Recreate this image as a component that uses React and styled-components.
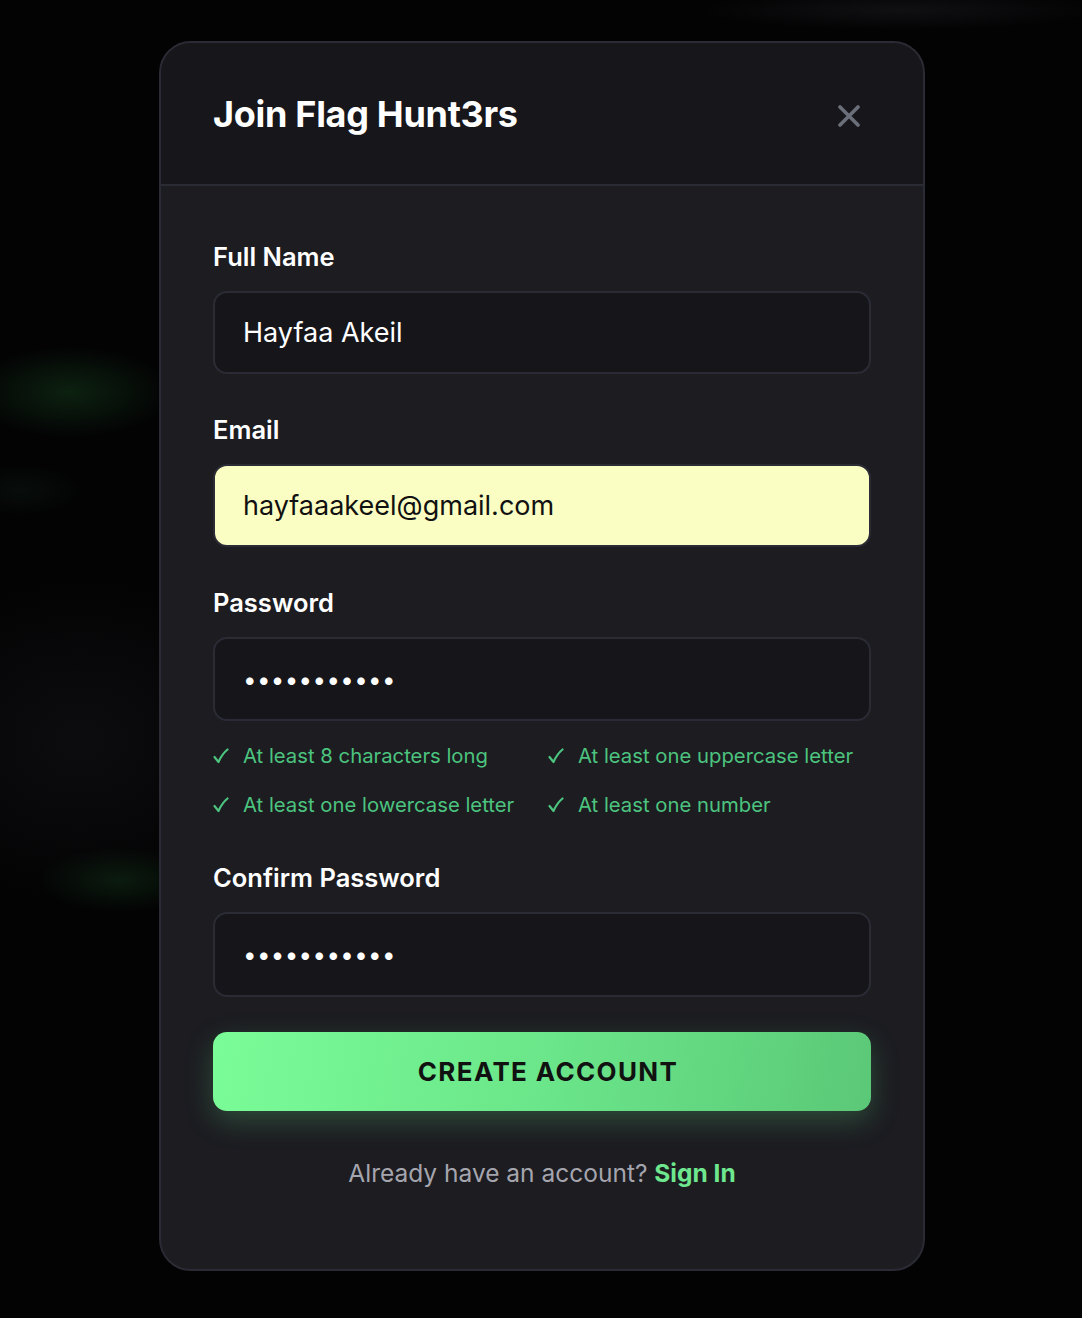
import React from 'react';
import styled, { createGlobalStyle } from 'styled-components';

const GlobalStyle = createGlobalStyle`
  * {
    box-sizing: border-box;
  }

  body {
    margin: 0;
    background-color: #030304;
    background-image:
      radial-gradient(ellipse 100px 45px at 70px 392px, rgba(40, 120, 50, 0.26), transparent),
      radial-gradient(ellipse 80px 32px at 120px 880px, rgba(40, 120, 50, 0.2), transparent),
      radial-gradient(ellipse 60px 25px at 20px 490px, rgba(40, 90, 60, 0.12), transparent),
      radial-gradient(ellipse 200px 160px at 80px 740px, rgba(30, 30, 34, 0.35), transparent),
      radial-gradient(ellipse 200px 20px at 900px 10px, rgba(40, 40, 44, 0.35), transparent);
    font-family: Inter, 'Noto Sans', sans-serif;
  }
`;

const Page = styled.div`
  min-height: 1318px;
  display: flex;
  justify-content: center;
  padding-top: 41px;
`;

const Modal = styled.div`
  width: 766px;
  height: 1230px;
  margin-left: 2px;
  border: 2px solid #2b2b35;
  border-radius: 32px;
  background: #1c1c21;
  overflow: hidden;
  display: flex;
  flex-direction: column;
`;

const Header = styled.div`
  height: 143px;
  display: flex;
  align-items: center;
  justify-content: space-between;
  padding: 0 50px 0 52px;
  background: #17171b;
  border-bottom: 2px solid #2b2b33;
`;

const Title = styled.h2`
  margin: 0;
  font-size: 36px;
  font-weight: 700;
  color: #ffffff;
  letter-spacing: -0.3px;
`;

const CloseButton = styled.button`
  width: 48px;
  height: 48px;
  display: flex;
  align-items: center;
  justify-content: center;
  margin-top: 4px;
  border: none;
  background: transparent;
  cursor: pointer;
  padding: 0;
`;

const Body = styled.form`
  padding: 53px 52px 0;
  display: flex;
  flex-direction: column;
`;

const Field = styled.div`
  display: flex;
  flex-direction: column;
  gap: 16px;
  margin-bottom: ${(props) => props.gap || 38}px;
`;

const Label = styled.label`
  font-size: 25.5px;
  line-height: 36px;
  font-weight: 600;
  color: #ffffff;
`;

const Input = styled.input`
  width: 100%;
  height: ${(props) => props.h || 83}px;
  padding: 0 28px;
  border: 2px solid #2b2b35;
  border-radius: 14px;
  background: ${(props) => (props.autofilled ? '#fbfec3' : '#16161a')};
  color: ${(props) => (props.autofilled ? '#111111' : '#ffffff')};
  font-family: Inter, 'Noto Sans', sans-serif;
  font-size: 27px;
  outline: none;

  &[type='password'] {
    font-size: 24px;
    letter-spacing: 0.4px;
  }
`;

const Requirements = styled.ul`
  list-style: none;
  margin: 20px 0 0;
  padding: 0;
  display: grid;
  grid-template-columns: 1fr 1fr;
  column-gap: 12px;
  row-gap: 19px;
`;

const Requirement = styled.li`
  display: flex;
  align-items: center;
  gap: 14px;
  font-size: 20.3px;
  line-height: 30px;
  color: #4cc47f;
`;

const CheckIcon = () => (
  <svg width="16" height="16" viewBox="0 0 16 16">
    <path d="M1.5 9 L5.5 14 Q9 6 14.5 1.5" fill="none" stroke="#4cc47f" strokeWidth="2.2" strokeLinecap="round" strokeLinejoin="round" />
  </svg>
);

const SubmitButton = styled.button`
  height: 79px;
  margin-top: -2px;
  padding: 0 0 0 12px;
  border: none;
  border-radius: 14px;
  background: linear-gradient(100deg, #7afc98 0%, #6be68a 50%, #5bc877 100%);
  box-shadow: 0 10px 28px rgba(100, 220, 130, 0.25);
  font-family: Inter, 'Noto Sans', sans-serif;
  font-size: 26px;
  font-weight: 700;
  letter-spacing: 1.35px;
  color: #111111;
  cursor: pointer;
`;

const Footer = styled.p`
  margin: 44px 0 0;
  text-align: center;
  font-size: 24.5px;
  line-height: 36px;
  color: #a5a5ae;
`;

const SignInLink = styled.a`
  font-weight: 700;
  color: #6ee78e;
  text-decoration: none;
  cursor: pointer;
`;

const requirements = [
  'At least 8 characters long',
  'At least one uppercase letter',
  'At least one lowercase letter',
  'At least one number'
];

const App = () => {
  return (
    <>
      <GlobalStyle />
      <Page>
        <Modal>
          <Header>
            <Title>Join Flag Hunt3rs</Title>
            <CloseButton type="button" aria-label="Close">
              <svg width="22" height="22" viewBox="0 0 22 22">
                <path d="M2 2 L20 20 M20 2 L2 20" stroke="#6b6f7a" strokeWidth="3.6" strokeLinecap="round" />
              </svg>
            </CloseButton>
          </Header>

          <Body onSubmit={(e) => e.preventDefault()}>
            <Field>
              <Label>Full Name</Label>
              <Input type="text" defaultValue="Hayfaa Akeil" readOnly />
            </Field>

            <Field>
              <Label>Email</Label>
              <Input type="email" defaultValue="hayfaaakeel@gmail.com" autofilled readOnly />
            </Field>

            <Field gap={40}>
              <Label>Password</Label>
              <div>
                <Input type="password" defaultValue="Password123" h={84} readOnly />
                <Requirements>
                  {requirements.map((item) => (
                    <Requirement key={item}>
                      <CheckIcon />
                      {item}
                    </Requirement>
                  ))}
                </Requirements>
              </div>
            </Field>

            <Field gap={37}>
              <Label>Confirm Password</Label>
              <Input type="password" defaultValue="Password123" h={85} readOnly />
            </Field>

            <SubmitButton type="submit">CREATE ACCOUNT</SubmitButton>

            <Footer>
              Already have an account? <SignInLink>Sign In</SignInLink>
            </Footer>
          </Body>
        </Modal>
      </Page>
    </>
  );
};

export default App;
